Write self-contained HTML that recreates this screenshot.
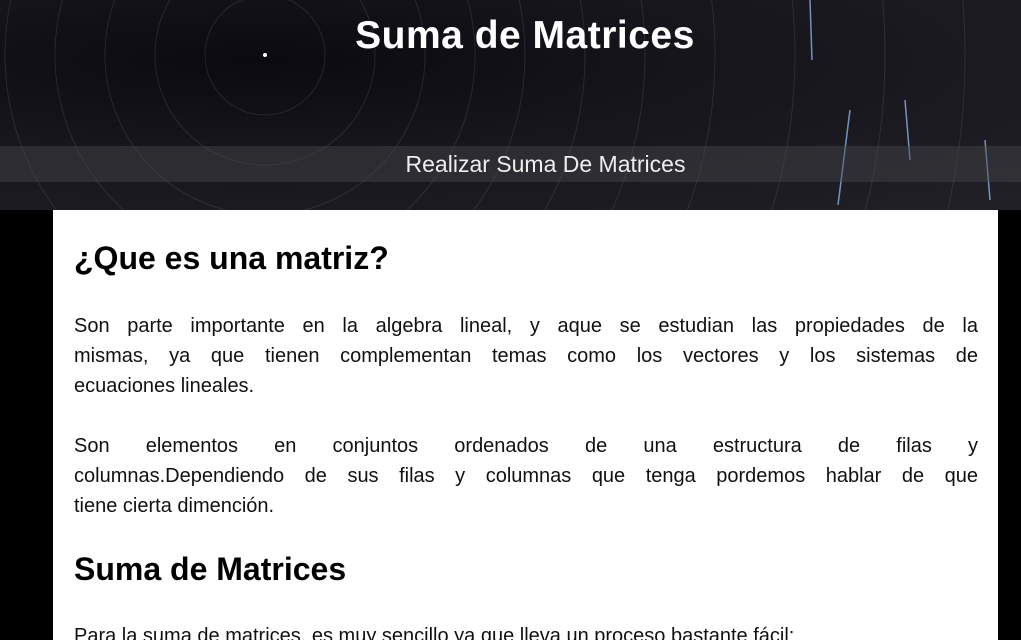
<!DOCTYPE html>
<html style="overflow:hidden"><head><meta charset="utf-8"><style>
html,body{margin:0;width:1021px;height:640px;overflow:hidden;background:#000;font-family:"Liberation Sans",sans-serif;}
header{position:relative;height:210px;width:1021px;background:radial-gradient(ellipse at 260px 60px,#0b0a10 0%,#16151c 40%,#1d1c22 80%,#222127 100%);overflow:hidden}
header h1{position:absolute;top:14px;left:29px;width:992px;text-align:center;margin:0;color:#fff;font-size:39px;font-weight:bold;letter-spacing:0.5px}
.nav{position:absolute;top:146px;left:0;width:1021px;height:36px;background:rgba(70,70,76,0.45);color:#eee;font-size:23px;text-align:center;line-height:36px}
.nav span{position:relative;left:35px}
main{position:absolute;top:210px;left:53px;width:945px;height:430px;background:#fff;overflow:hidden}
h2{margin:0;position:absolute;left:21px;font-size:32px;font-weight:bold;color:#000}
.p{position:absolute;left:21px;width:904px;font-size:20px;line-height:30px;color:#111;font-weight:normal}
.l{text-align:justify;text-align-last:justify;white-space:nowrap;overflow:hidden}
.n{text-align:left;white-space:nowrap;overflow:hidden}
</style></head><body>
<header>
<svg width="1021" height="210" style="position:absolute;left:0;top:0">
<g fill="none" stroke="#9aa3b8" stroke-width="1" opacity=".15">
<circle cx="265" cy="55" r="60"/><circle cx="265" cy="55" r="110"/><circle cx="265" cy="55" r="160"/><circle cx="265" cy="55" r="210"/><circle cx="265" cy="55" r="260"/><circle cx="265" cy="55" r="320"/><circle cx="265" cy="55" r="380"/><circle cx="265" cy="55" r="450"/><circle cx="265" cy="55" r="530"/><circle cx="265" cy="55" r="620"/><circle cx="265" cy="55" r="700"/>
</g>
<g stroke="#8fb0e8" stroke-width="1.5" opacity=".8"><line x1="905" y1="100" x2="910" y2="160"/><line x1="985" y1="140" x2="990" y2="200"/><line x1="810" y1="0" x2="812" y2="60"/><line x1="850" y1="110" x2="838" y2="205"/></g>
<circle cx="265" cy="55" r="2" fill="#fff"/>
</svg>
<h1>Suma de Matrices</h1>
<div class="nav"><span>Realizar Suma De Matrices</span></div>
</header>
<main>
<h2 style="top:30px">¿Que es una matriz?</h2>
<div class="p" style="top:101px">
<div class="l">Son parte importante en la algebra lineal, y aque se estudian las propiedades de la</div>
<div class="l">mismas, ya que tienen complementan temas como los vectores y los sistemas de</div>
<div class="n">ecuaciones lineales.</div>
</div>
<div class="p" style="top:221px">
<div class="l">Son elementos en conjuntos ordenados de una estructura de filas y</div>
<div class="l">columnas.Dependiendo de sus filas y columnas que tenga pordemos hablar de que</div>
<div class="n">tiene cierta dimención.</div>
</div>
<h2 style="top:341px">Suma de Matrices</h2>
<div class="p" style="top:411px;height:19px;overflow:hidden"><div class="n">Para la suma de matrices, es muy sencillo ya que lleva un proceso bastante fácil:</div></div>
</main>
</body></html>
